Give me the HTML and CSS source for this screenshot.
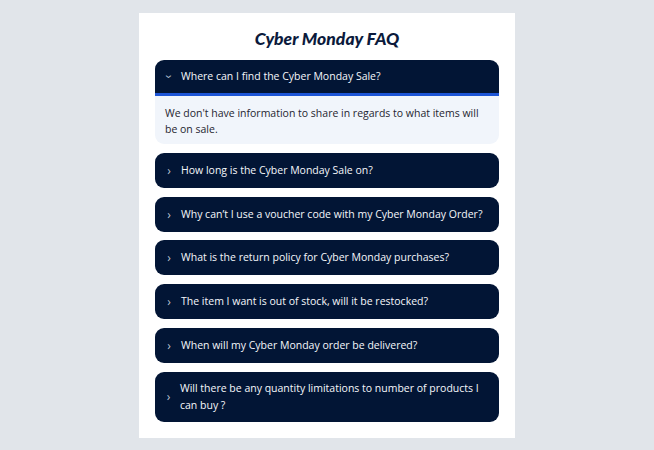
FILE: index.html
```html
<!DOCTYPE html>
<html lang="en">
<head>
    <meta charset="UTF-8">
    <meta name="viewport" content="width=device-width, initial-scale=1.0">
    <title>Cyber Monday FAQ</title>
    <link rel="stylesheet" href="styles.css">
</head>
<body>
    <div class="container">
        <h2>Cyber Monday FAQ</h2>
        <div class="faq">
            <div class="item open">
                <div class="question"><span class="chevron">&rsaquo;</span><span>Where can I find the Cyber Monday Sale?</span></div>
                <div class="answer">We don't have information to share in regards to what items will be on sale.</div>
            </div>
            <div class="item">
                <div class="question"><span class="chevron">&rsaquo;</span><span>How long is the Cyber Monday Sale on?</span></div>
            </div>
            <div class="item">
                <div class="question"><span class="chevron">&rsaquo;</span><span>Why can’t I use a voucher code with my Cyber Monday Order?</span></div>
            </div>
            <div class="item">
                <div class="question"><span class="chevron">&rsaquo;</span><span>What is the return policy for Cyber Monday purchases?</span></div>
            </div>
            <div class="item">
                <div class="question"><span class="chevron">&rsaquo;</span><span>The item I want is out of stock, will it be restocked?</span></div>
            </div>
            <div class="item">
                <div class="question"><span class="chevron">&rsaquo;</span><span>When will my Cyber Monday order be delivered?</span></div>
            </div>
            <div class="item">
                <div class="question"><span class="chevron">&rsaquo;</span><span>Will there be any quantity limitations to number of products I can buy ?</span></div>
            </div>
        </div>
    </div>
</body>
</html>
```

FILE: styles.css
```css
body {
    font-family: "Open Sans", sans-serif;
    margin: 0;
    padding: 13px 0 0;
    background-color: #e1e5ea;
    display: flex;
    justify-content: center;
}

.container {
    background-color: #ffffff;
    width: 376px;
    box-sizing: border-box;
    padding: 15px 16px 16px;
}

h2 {
    margin: 0 0 10px;
    text-align: center;
    font-family: Lato, sans-serif;
    font-weight: 900;
    font-style: italic;
    font-size: 17.5px;
    line-height: 22px;
    color: #0b1a3c;
}

.faq {
    display: flex;
    flex-direction: column;
    gap: 8.8px;
}

.item {
    border-radius: 9px;
    overflow: hidden;
}

.question {
    display: flex;
    align-items: center;
    gap: 8px;
    padding: 8px 16px 8px 10px;
    min-height: 19px;
    background-color: #021535;
    color: #f5f7fb;
    font-size: 10.5px;
    line-height: 17px;
}

.chevron {
    width: 8px;
    text-align: center;
    font-size: 12px;
    color: #b9c2d2;
}

.open .chevron {
    transform: rotate(90deg);
}

.open .question {
    border-bottom: 3px solid #1d55d6;
    padding: 7px 16px 7px 10px;
}

.answer {
    background-color: #f1f5fb;
    color: #1f2530;
    font-size: 10.5px;
    line-height: 16px;
    padding: 9px 16px 7px 10px;
}
```
